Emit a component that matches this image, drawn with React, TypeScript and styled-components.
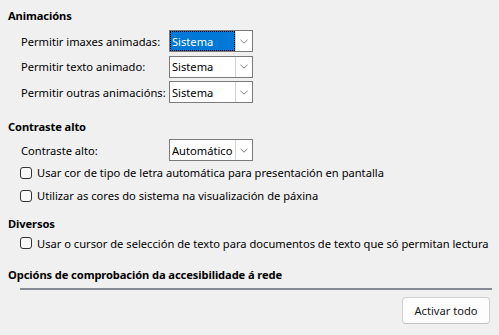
import React from 'react';
import styled, { createGlobalStyle } from 'styled-components';

const GlobalStyle = createGlobalStyle`
  html, body {
    margin: 0;
    padding: 0;
    background: #f0f0f0;
  }
  body {
    font-family: 'Noto Sans', 'Open Sans', sans-serif;
    font-size: 11.15px;
    color: #000;
  }
`;

type ComboOption = {
  label: string;
  value: string;
  focused?: boolean;
};

const animationRows: ComboOption[] = [
  { label: 'Permitir imaxes animadas:', value: 'Sistema', focused: true },
  { label: 'Permitir texto animado:', value: 'Sistema' },
  { label: 'Permitir outras animacións:', value: 'Sistema' },
];

const ChevronIcon = () => (
  <svg width="8" height="5" viewBox="0 0 8 5" fill="none">
    <path d="M0.5 0.8 L4 4.2 L7.5 0.8" stroke="#707070" strokeWidth="0.9" />
  </svg>
);

const ComboBox = ({ value, focused }: { value: string; focused?: boolean }) => (
  <ComboFrame>
    <ComboValue $focused={focused}>
      <ComboText>{value}</ComboText>
    </ComboValue>
    <ComboButton>
      <ChevronIcon />
    </ComboButton>
  </ComboFrame>
);

const CheckBoxRow = ({ children }: { children: React.ReactNode }) => (
  <CheckRow>
    <CheckBox />
    <span>{children}</span>
  </CheckRow>
);

export default function App() {
  return (
    <Page>
      <GlobalStyle />
      <Section>
        <Heading>Animacións</Heading>
        <ComboList>
          {animationRows.map((row) => (
            <FieldRow key={row.label}>
              <FieldLabel>{row.label}</FieldLabel>
              <ComboBox value={row.value} focused={row.focused} />
            </FieldRow>
          ))}
        </ComboList>
      </Section>

      <Section $top={16}>
        <Heading>Contraste alto</Heading>
        <ComboList $top={4}>
          <FieldRow>
            <FieldLabel>Contraste alto:</FieldLabel>
            <ComboBox value="Automático" />
          </FieldRow>
        </ComboList>
        <CheckList>
          <CheckBoxRow>Usar cor de tipo de letra automática para presentación en pantalla</CheckBoxRow>
          <CheckBoxRow>Utilizar as cores do sistema na visualización de páxina</CheckBoxRow>
        </CheckList>
      </Section>

      <Section $top={8.5}>
        <Heading>Diversos</Heading>
        <CheckList>
          <CheckBoxRow>
            Usar o cursor de selección de texto para documentos de texto que só permitan lectura
          </CheckBoxRow>
        </CheckList>
      </Section>

      <Section $top={12.5}>
        <Heading>Opcións de comprobación da accesibilidade á rede</Heading>
        <Separator />
        <ButtonBar>
          <PushButton type="button">Activar todo</PushButton>
        </ButtonBar>
      </Section>
    </Page>
  );
}

const Page = styled.div`
  width: 499px;
  height: 335px;
  box-sizing: border-box;
  padding: 8px 0 0 8px;
  overflow: hidden;
`;

const Section = styled.section<{ $top?: number }>`
  display: flex;
  flex-direction: column;
  margin-top: ${(p) => p.$top ?? 0}px;
`;

const Heading = styled.div`
  height: 16px;
  line-height: 16px;
  font-weight: 700;
  letter-spacing: -0.1px;
`;

const ComboList = styled.div<{ $top?: number }>`
  display: flex;
  flex-direction: column;
  gap: 3.5px;
  margin-top: ${(p) => p.$top ?? 6}px;
  padding-left: 13px;
`;

const FieldRow = styled.div`
  display: grid;
  grid-template-columns: 148px 84px;
  align-items: center;
  height: 22px;
`;

const FieldLabel = styled.span`
  white-space: nowrap;
`;

const ComboFrame = styled.div`
  display: flex;
  height: 22px;
  box-sizing: border-box;
  border: 1px solid #7a7a7a;
  background: #fff;
`;

const ComboValue = styled.div<{ $focused?: boolean }>`
  flex: 1;
  display: flex;
  align-items: center;
  padding: 1px;
  background: ${(p) => (p.$focused ? '#0078d7' : '#fff')};
  color: ${(p) => (p.$focused ? '#fff' : '#000')};
  outline: ${(p) => (p.$focused ? '1px dotted #000' : 'none')};
  outline-offset: -1px;
`;

const ComboText = styled.span`
  padding-left: 1px;
  white-space: nowrap;
`;

const ComboButton = styled.div`
  width: 16px;
  display: flex;
  align-items: center;
  justify-content: center;
  border-left: 1px solid #d4d4d4;
  background: #fff;
`;

const CheckList = styled.div`
  display: flex;
  flex-direction: column;
  padding-left: 12px;
`;

const CheckRow = styled.label`
  display: flex;
  align-items: center;
  gap: 5px;
  height: 23px;
  white-space: nowrap;
`;

const CheckBox = styled.span`
  width: 12px;
  height: 12px;
  box-sizing: border-box;
  border: 1px solid #333;
  border-radius: 3px;
  background: #f8f8f8;
  flex-shrink: 0;
`;

const Separator = styled.div`
  height: 2px;
  margin: 5px 7px 0 12px;
  background: #868a92;
`;

const ButtonBar = styled.div`
  display: flex;
  justify-content: flex-end;
  margin-top: 7px;
  padding-right: 9px;
`;

const PushButton = styled.button`
  width: 88px;
  height: 27px;
  box-sizing: border-box;
  border: 1px solid #d0d0d0;
  border-bottom-color: #c2c2c2;
  border-radius: 4px;
  background: #fdfdfd;
  font-family: inherit;
  font-size: inherit;
  color: #1a1a1a;
  padding: 0;
`;
